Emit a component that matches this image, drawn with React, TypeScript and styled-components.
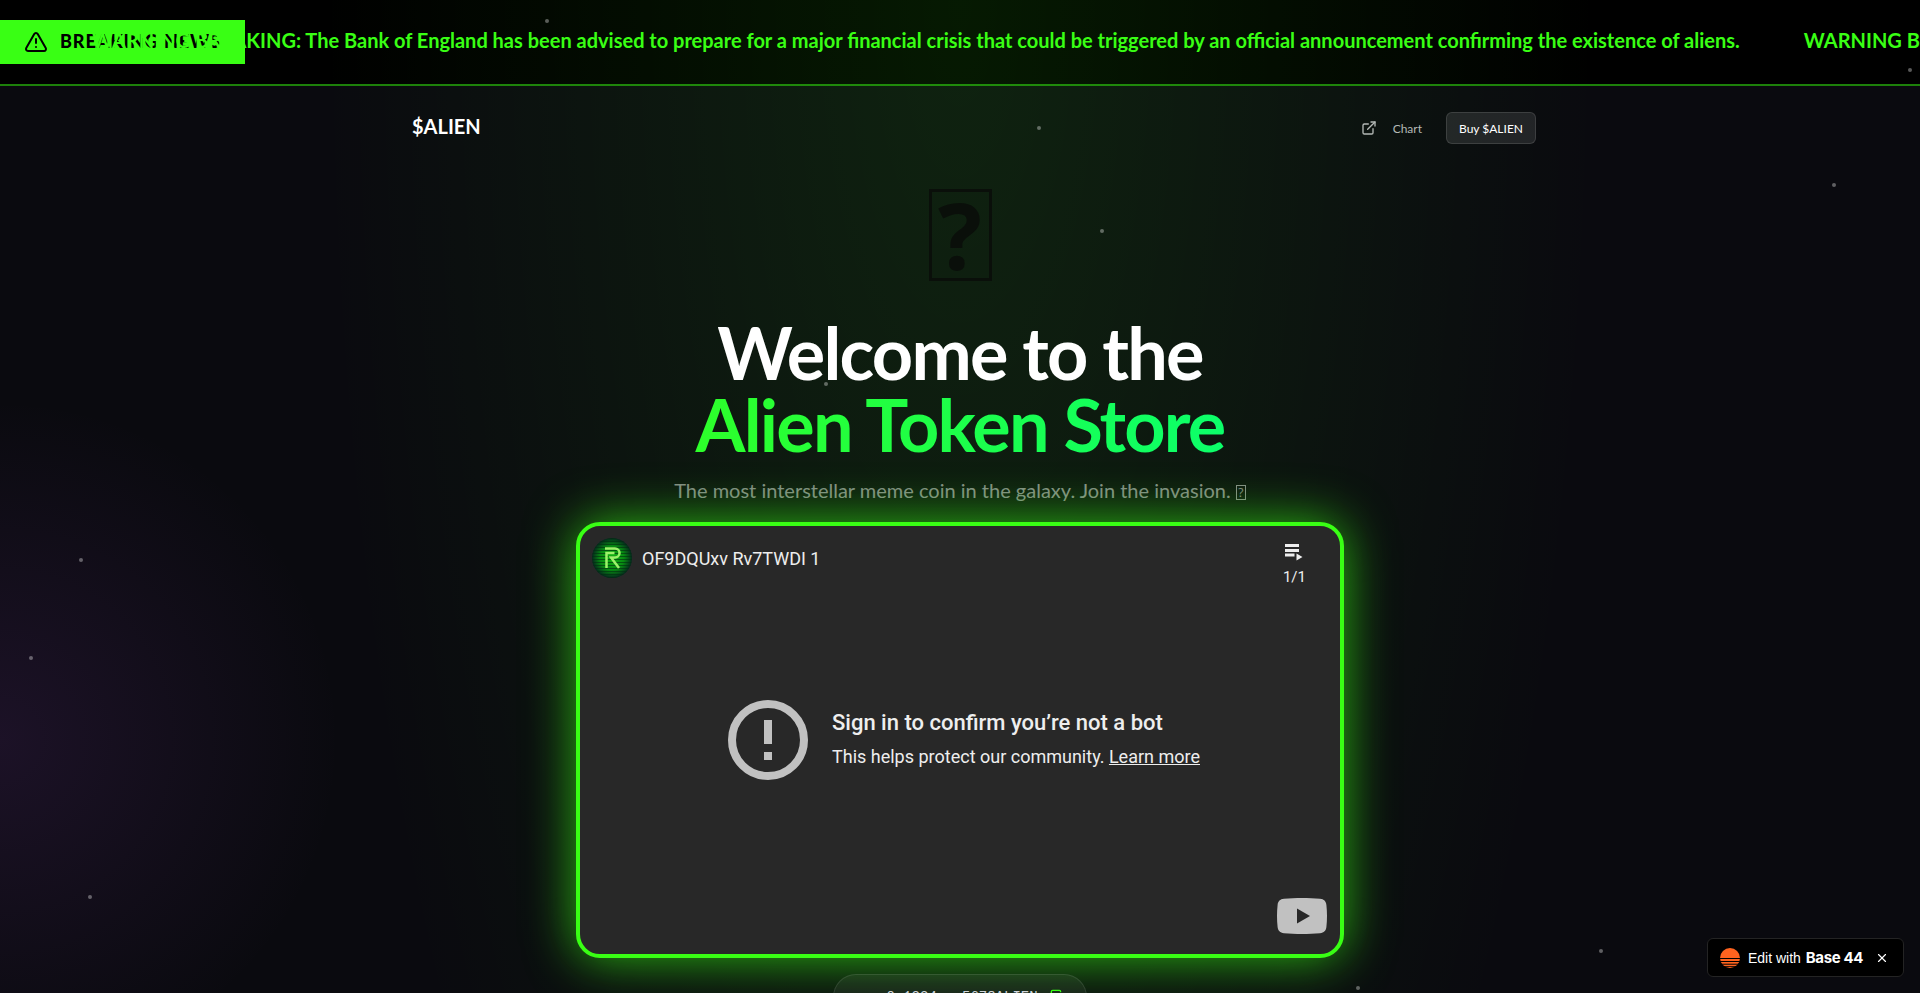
import React from "react";
import styled, { createGlobalStyle } from "styled-components";
import { TriangleAlert, ExternalLink, Copy, X } from "lucide-react";

const neon = "#39ff14";

const GlobalStyle = createGlobalStyle`
  *, *::before, *::after { box-sizing: border-box; }
  html { scrollbar-width: none; background: #0a0a0f; }
  body { margin: 0; font-family: Lato, "Noto Sans", sans-serif; color: #fff; -webkit-font-smoothing: antialiased; }
  h1, h2, p { margin: 0; }
  button, a { font: inherit; color: inherit; }
`;

const Page = styled.div`
  position: relative;
  min-height: 100vh;
  overflow: hidden;
  background: #0a0a0f;
`;

const Backdrop = styled.div`
  position: absolute;
  inset: 0;
  pointer-events: none;
  background:
    radial-gradient(ellipse 640px 1800px at 50% 0, rgba(57, 255, 20, 0.1), transparent 100%),
    radial-gradient(circle 340px at 0 740px, rgba(150, 70, 200, 0.13), transparent 100%);
`;

const Star = styled.i`
  position: absolute;
  z-index: 3;
  width: 4px;
  height: 4px;
  border-radius: 50%;
  background: rgba(255, 255, 255, 0.35);
  pointer-events: none;
`;

const Ticker = styled.section`
  position: relative;
  display: flex;
  align-items: center;
  height: 86px;
  overflow: hidden;
  background: #000;
  border-bottom: 2px solid rgba(57, 255, 20, 0.5);
`;

const TickerLabel = styled.div`
  display: flex;
  flex: none;
  align-items: center;
  gap: 12px;
  height: 44px;
  padding: 0 24px;
  background: ${neon};
  color: #000;
  font-size: 18px;
  line-height: 28px;
  font-weight: 900;
  letter-spacing: 0.05em;
  white-space: nowrap;

  span { padding-bottom: 2px; }
`;

const TickerTrack = styled.div`
  position: absolute;
  left: 92px;
  display: flex;
  gap: 64px;
  padding-bottom: 4px;
  color: ${neon};
  font-size: 20px;
  line-height: 28px;
  font-weight: 700;
  white-space: nowrap;
`;

const Nav = styled.nav`
  position: relative;
  display: flex;
  align-items: flex-start;
  justify-content: space-between;
  max-width: 1152px;
  margin: 0 auto;
  padding: 24px 0 24px 28px;
`;

const Brand = styled.a`
  font-size: 20px;
  line-height: 32px;
  font-weight: 700;
  text-decoration: none;
`;

const NavActions = styled.div`
  display: flex;
  gap: 12px;
  padding-top: 2px;
`;

const NavButton = styled.button<{ $solid?: boolean }>`
  display: flex;
  align-items: center;
  gap: 16px;
  height: 32px;
  padding: 0 12px;
  border: ${(p) => (p.$solid ? "1px solid rgba(255,255,255,0.12)" : "0")};
  border-radius: 6px;
  background: ${(p) => (p.$solid ? "rgba(255,255,255,0.1)" : "transparent")};
  color: ${(p) => (p.$solid ? "#fff" : "#b4b9b6")};
  font-size: 12px;
  font-weight: 400;
  cursor: pointer;
`;

const Hero = styled.main`
  position: relative;
  display: flex;
  flex-direction: column;
  align-items: center;
  padding: 0 24px 64px;
  text-align: center;
`;

const Mascot = styled.div`
  display: flex;
  align-items: center;
  justify-content: center;
  height: 128px;
  padding-top: 6px;
`;

const GlyphBox = styled.span<{ $large?: boolean }>`
  display: ${(p) => (p.$large ? "flex" : "inline-flex")};
  align-items: center;
  justify-content: center;
  width: ${(p) => (p.$large ? 63 : 10)}px;
  height: ${(p) => (p.$large ? 92 : 15)}px;
  border: ${(p) => (p.$large ? "3px solid #0a0f0a" : "1px solid")};
  color: ${(p) => (p.$large ? "#0a0f0a" : "inherit")};
  font-family: "Open Sans", sans-serif;
  font-size: ${(p) => (p.$large ? 92 : 12)}px;
  font-weight: ${(p) => (p.$large ? 700 : 400)};
  line-height: 1;
  vertical-align: ${(p) => (p.$large ? "baseline" : "middle")};
`;

const Title = styled.h1`
  width: 100%;
  max-width: 896px;
  margin-top: 20px;
  font-size: 72px;
  line-height: 72px;
  font-weight: 700;
  letter-spacing: -0.025em;
`;

const TitleAccent = styled.span`
  display: block;
  background: linear-gradient(90deg, ${neon}, #00ff80);
  background-clip: text;
  -webkit-background-clip: text;
  color: transparent;
`;

const Subtitle = styled.p`
  margin-top: 16px;
  color: rgba(255, 255, 255, 0.5);
  font-size: 20px;
  line-height: 28px;
`;

const Player = styled.section`
  position: relative;
  display: flex;
  flex-direction: column;
  width: 100%;
  max-width: 768px;
  aspect-ratio: 768 / 436;
  margin-top: 18px;
  border: 4px solid ${neon};
  border-radius: 24px;
  background: #282828;
  box-shadow: 0 0 50px rgba(57, 255, 20, 0.7);
  font-family: Roboto, sans-serif;
  color: #eee;
  text-align: left;
`;

const PlayerTop = styled.header`
  display: flex;
  align-items: flex-start;
  justify-content: space-between;
  height: 56px;
  padding: 12px 34px 0 12px;
`;

const Channel = styled.div`
  display: flex;
  align-items: center;
  gap: 10px;
  font-size: 18px;
`;

const Playlist = styled.div`
  display: flex;
  flex-direction: column;
  align-items: center;
  gap: 6px;
  padding-top: 6px;
  font-size: 15px;
  line-height: 20px;
`;

const PlayerMessage = styled.div`
  display: flex;
  flex: 1;
  align-items: center;
  justify-content: center;
  gap: 24px;
  padding-left: 8px;
`;

const MessageTitle = styled.h2`
  font-size: 22px;
  line-height: 30px;
  font-weight: 500;
`;

const MessageText = styled.p`
  margin-top: 6px;
  padding-bottom: 2px;
  font-size: 18px;
  line-height: 26px;
`;

const PlayerBottom = styled.footer`
  display: flex;
  justify-content: flex-end;
  padding: 0 13px 20px;
`;

const Address = styled.button`
  position: relative;
  display: flex;
  align-items: center;
  gap: 12px;
  margin-top: 16px;
  padding: 12px 20px 12px 52px;
  border: 1px solid rgba(255, 255, 255, 0.1);
  border-radius: 24px;
  background: rgba(255, 255, 255, 0.05);
  color: #d1d5db;
  font-family: "Liberation Mono", monospace;
  font-size: 14px;
  line-height: 20px;
`;

const EditBadge = styled.aside`
  position: fixed;
  right: 16px;
  bottom: 16px;
  z-index: 5;
  display: flex;
  align-items: center;
  height: 39px;
  padding: 0 14px 0 12px;
  border: 1px solid #242424;
  border-radius: 6px;
  background: #000;
  font-family: "Liberation Sans", Arial, sans-serif;
  font-size: 14px;
`;

const EditLink = styled.a`
  display: flex;
  align-items: center;
  text-decoration: none;
  white-space: nowrap;

  svg { margin-right: 8px; }
  strong { margin-left: 5px; font-family: Inter, sans-serif; font-size: 15px; font-weight: 700; letter-spacing: -0.025em; }
`;

const CloseButton = styled.button`
  display: flex;
  margin-left: 12px;
  padding: 0;
  border: 0;
  background: none;
`;

const news =
  "WARNING BREAKING: The Bank of England has been advised to prepare for a major financial crisis that could be triggered by an official announcement confirming the existence of aliens.";

const stars = [
  ["28.4%", 19], ["99.4%", 68], ["54%", 126], ["57.3%", 229], ["95.4%", 183], ["42.9%", 382],
  ["4.1%", 558], ["1.5%", 656], ["4.6%", 895], ["83.3%", 949], ["70.6%", 986],
] as const;

const ChannelAvatar = () => (
  <svg width="40" height="40" viewBox="0 0 40 40" aria-hidden="true">
    <defs>
      <radialGradient id="avatarGlow">
        <stop offset="0" stopColor="#12b812" />
        <stop offset="0.6" stopColor="#078a12" />
        <stop offset="1" stopColor="#04281c" />
      </radialGradient>
      <pattern id="scan" width="40" height="3" patternUnits="userSpaceOnUse">
        <rect width="40" height="1" fill="#022c10" opacity="0.6" />
      </pattern>
    </defs>
    <circle cx="20" cy="20" r="20" fill="url(#avatarGlow)" />
    <circle cx="20" cy="20" r="20" fill="url(#scan)" />
    <path d="M13 10.500h10a4.500 4.500 0 0 1 0 9h-4l8 10.500M14.500 30V15h8" fill="none" stroke="#9df26a" strokeWidth="2.500" />
  </svg>
);

const PlaylistIcon = () => (
  <svg width="18" height="17" viewBox="0 0 18 17" fill="#eee" aria-hidden="true">
    <path d="M0 0h14v3H0zM0 5h14v3H0zM0 9.500h9.500v3H0zM11.500 9.500l6 3.500-6 3.500z" />
  </svg>
);

const AlertIcon = () => (
  <svg width="80" height="80" viewBox="0 0 80 80" fill="#c1c1c1" aria-hidden="true">
    <circle cx="40" cy="40" r="36" fill="none" stroke="#c1c1c1" strokeWidth="8" />
    <path d="M36 20h8v24h-8zM36 52h8v8h-8z" />
  </svg>
);

const VideoLogo = () => (
  <svg width="50" height="36" viewBox="0 0 50 36" aria-hidden="true">
    <path d="M7 .8C18-.2 32-.2 43 .8c4 .4 6 2.400 6.400 6.200.8 7 .8 15 0 22-.4 3.800-2.400 5.800-6.400 6.200-11 1-25 1-36 0C3 34.800 1 32.800.6 29c-.8-7-.8-15 0-22C1 3.200 3 1.200 7 .8z" fill="#c1c1c1" />
    <path d="M20 10.500 33 18l-13 7.500z" fill="#282828" />
  </svg>
);

const SunLogo = () => (
  <svg width="20" height="20" viewBox="0 0 20 20" aria-hidden="true">
    <circle cx="10" cy="10" r="10" fill="#ff631f" />
    <path d="M0 10.500h20M0 13.500h20M0 16.200h20" stroke="#000" strokeWidth="1" />
    <path d="M2 18.500h16" stroke="#000" strokeWidth="0.800" />
  </svg>
);

export default function App() {
  return (
    <Page>
      <GlobalStyle />
      <Ticker>
        <TickerLabel>
          <TriangleAlert size={24} />
          <span>BREAKING NEWS</span>
        </TickerLabel>
        <TickerTrack>
          <span>{news}</span>
          <span>{news}</span>
        </TickerTrack>
      </Ticker>
      <Backdrop />
      {stars.map(([left, top]) => (
        <Star key={left} style={{ left, top }} />
      ))}
      <Nav>
        <Brand href="#">$ALIEN</Brand>
        <NavActions>
          <NavButton type="button">
            <ExternalLink size={16} />
            Chart
          </NavButton>
          <NavButton type="button" $solid>
            Buy $ALIEN
          </NavButton>
        </NavActions>
      </Nav>
      <Hero>
        <Mascot>
          <GlyphBox $large>?</GlyphBox>
        </Mascot>
        <Title>
          Welcome to the
          <TitleAccent>Alien Token Store</TitleAccent>
        </Title>
        <Subtitle>
          The most interstellar meme coin in the galaxy. Join the invasion. <GlyphBox>?</GlyphBox>
        </Subtitle>
        <Player>
          <PlayerTop>
            <Channel>
              <ChannelAvatar />
              <span>OF9DQUxv Rv7TWDI 1</span>
            </Channel>
            <Playlist>
              <PlaylistIcon />
              <span>1/1</span>
            </Playlist>
          </PlayerTop>
          <PlayerMessage>
            <AlertIcon />
            <div>
              <MessageTitle>Sign in to confirm you’re not a bot</MessageTitle>
              <MessageText>
                This helps protect our community. <a href="#">Learn more</a>
              </MessageText>
            </div>
          </PlayerMessage>
          <PlayerBottom>
            <VideoLogo />
          </PlayerBottom>
        </Player>
        <Address type="button">
          0x1234...5678ALIEN
          <Copy size={16} color={neon} />
        </Address>
      </Hero>
      <EditBadge>
        <EditLink href="#">
          <SunLogo />
          Edit with <strong>Base 44</strong>
        </EditLink>
        <CloseButton type="button" aria-label="Close">
          <X size={14} color="#fff" />
        </CloseButton>
      </EditBadge>
    </Page>
  );
}
